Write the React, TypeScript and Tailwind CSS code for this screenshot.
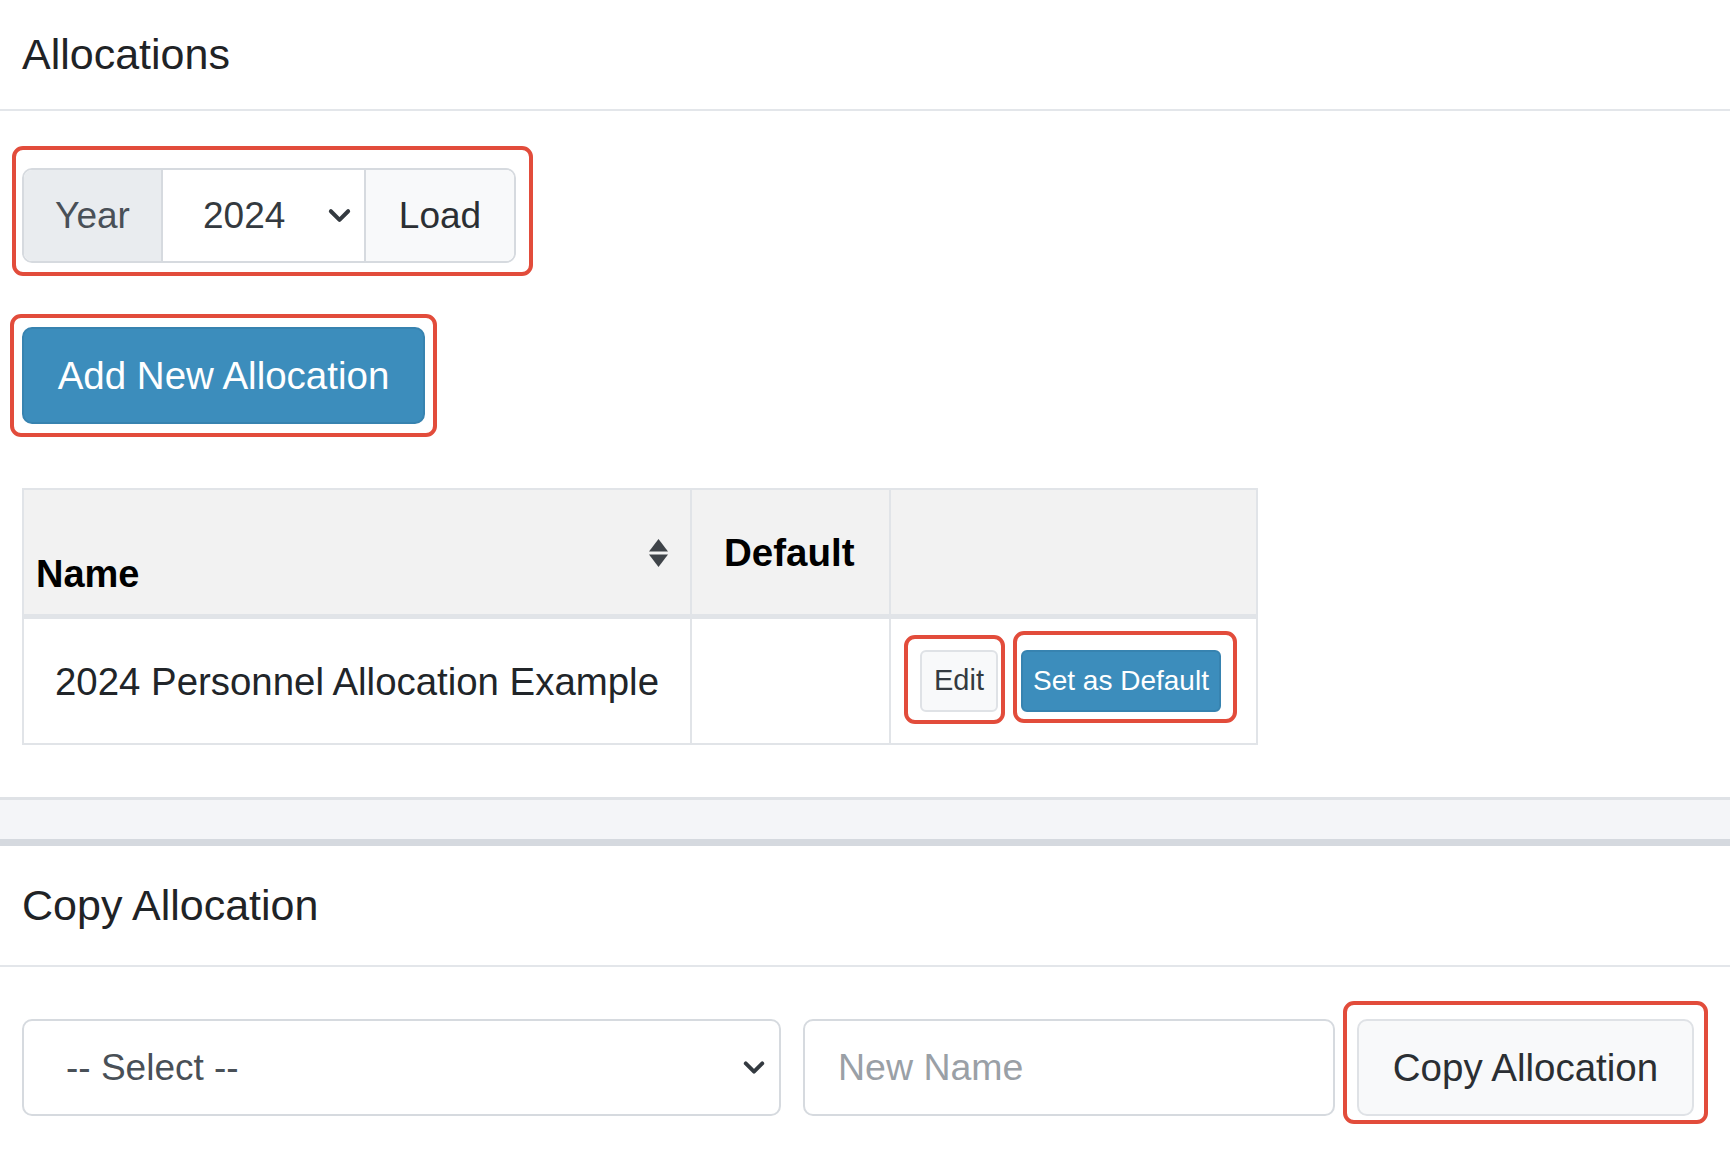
import React from "react";

function Chevron({ className }: { className?: string }) {
  return (
    <svg className={className} viewBox="0 0 24 16" fill="none">
      <polyline points="3,3 12,12 21,3" stroke="#343a40" strokeWidth="4.2" strokeLinecap="round" strokeLinejoin="round" />
    </svg>
  );
}

function SortIcon() {
  return (
    <svg width="21" height="28" viewBox="0 0 21 28" className="absolute right-[21px] top-[49px]">
      <polygon points="10.5,0 20,12.5 1,12.5" fill="#3f4449" />
      <polygon points="1,15.5 20,15.5 10.5,28" fill="#3f4449" />
    </svg>
  );
}

function RedBox({ className }: { className: string }) {
  return <div className={"pointer-events-none absolute rounded-[11px] border-[4px] border-[#e24c3b] " + className} />;
}

export default function App() {
  return (
    <div className="min-h-[1151px] w-[1730px] overflow-hidden bg-white font-['Liberation_Sans',Arial,sans-serif] text-[#212529]">
      {/* Card 1 */}
      <section className="bg-white">
        <div className="flex h-[111px] items-center border-b-[2px] border-[#e3e6ea] pl-[22px]">
          <h2 className="text-[43px] font-normal leading-none text-[#1f2326]">Allocations</h2>
        </div>
        <div className="flex flex-col items-start px-[22px] pb-[52px] pt-[57px]">
          {/* Year input group */}
          <div className="relative">
            <RedBox className="-left-[10px] -right-[17px] -top-[22px] -bottom-[13px]" />
            <div className="flex h-[95px] overflow-hidden rounded-[10px] border-[2px] border-[#d6dadf] text-[37px]">
              <div className="flex w-[137px] items-center justify-center bg-[#e9ecef] text-[#495057]">Year</div>
              <div className="flex w-[203px] items-center border-l-[2px] border-[#d6dadf] bg-white pl-[40px] pr-[13px] text-[#343a40]">
                <span className="flex-1">2024</span>
                <Chevron className="h-[16px] w-[23px]" />
              </div>
              <div className="flex w-[150px] items-center justify-center border-l-[2px] border-[#d6dadf] bg-[#f8f9fa] text-[#2b2f33]">Load</div>
            </div>
          </div>

          {/* Add new allocation */}
          <div className="relative mt-[64px]">
            <RedBox className="-left-[12px] -right-[12px] -top-[13px] -bottom-[13px]" />
            <button className="flex h-[97px] w-[403px] items-center justify-center rounded-[10px] border-[2px] border-[#3783b0] bg-[#3c8dbc] text-[38.5px] text-white">
              Add New Allocation
            </button>
          </div>

          {/* Table */}
          <table className="mt-[64px] border-collapse border-[2px] border-[#e1e4e8]">
            <thead>
              <tr className="h-[127px] bg-[#f2f2f2]">
                <th className="relative w-[668px] border-[2px] border-b-[5px] border-[#e1e4e8] pb-[21px] pl-[12px] text-left align-bottom text-[38px] font-bold leading-none text-black">
                  Name
                  <SortIcon />
                </th>
                <th className="w-[199px] border-[2px] border-b-[5px] border-[#e1e4e8] pl-[32px] pt-[44px] text-left align-top text-[38.5px] font-bold leading-none text-black">
                  Default
                </th>
                <th className="w-[367px] border-[2px] border-b-[5px] border-[#e1e4e8]" />
              </tr>
            </thead>
            <tbody>
              <tr className="h-[128px]">
                <td className="border-[2px] border-[#e1e4e8] pl-[31px] pt-[2px] align-middle text-[38.4px] leading-none text-[#212529]">
                  2024 Personnel Allocation Example
                </td>
                <td className="border-[2px] border-[#e1e4e8]" />
                <td className="border-[2px] border-[#e1e4e8] pl-[29px] align-middle">
                  <div className="flex items-center gap-[23px]">
                    <div className="relative">
                      <RedBox className="-left-[16px] -right-[7px] -top-[15px] -bottom-[12px]" />
                      <button className="flex h-[62px] w-[78px] items-center justify-center rounded-[6px] border-[2px] border-[#dfe2e6] bg-[#f8f9fa] text-[29px] text-[#343a40]">
                        Edit
                      </button>
                    </div>
                    <div className="relative">
                      <RedBox className="-left-[8px] -right-[16px] -top-[19px] -bottom-[11px]" />
                      <button className="flex h-[62px] w-[200px] items-center justify-center rounded-[6px] border-[2px] border-[#3783b0] bg-[#3c8dbc] text-[28px] text-white">
                        Set as Default
                      </button>
                    </div>
                  </div>
                </td>
              </tr>
            </tbody>
          </table>
        </div>
      </section>

      {/* gap between cards */}
      <div className="h-[49px] border-b-[7px] border-t-[3px] border-b-[#d5d9df] border-t-[#dfe2e6] bg-[#f4f5f8]" />

      {/* Card 2 */}
      <section className="bg-white">
        <div className="flex h-[121px] items-center border-b-[2px] border-[#e3e6ea] pl-[22px]">
          <h2 className="text-[43px] font-normal leading-none text-[#1f2326]">Copy Allocation</h2>
        </div>
        <div className="flex items-center gap-[22px] px-[22px] pt-[52px]">
          <div className="flex h-[97px] w-[759px] items-center rounded-[10px] border-[2px] border-[#d6dadf] bg-white pl-[42px] pr-[14px] text-[37px] text-[#495057]">
            <span className="flex-1">-- Select --</span>
            <Chevron className="h-[16px] w-[22px]" />
          </div>
          <input
            placeholder="New Name"
            className="h-[97px] w-[532px] rounded-[10px] border-[2px] border-[#d6dadf] bg-white pl-[33px] text-[37.5px] text-[#495057] outline-none placeholder:text-[#9aa0a6]"
          />
          <div className="relative">
            <RedBox className="-left-[14px] -right-[14px] -top-[18px] -bottom-[8px]" />
            <button className="flex h-[97px] w-[337px] items-center justify-center rounded-[10px] border-[2px] border-[#dfe2e6] bg-[#f8f9fa] text-[38.5px] text-[#2b2f33]">
              Copy Allocation
            </button>
          </div>
        </div>
      </section>
    </div>
  );
}
